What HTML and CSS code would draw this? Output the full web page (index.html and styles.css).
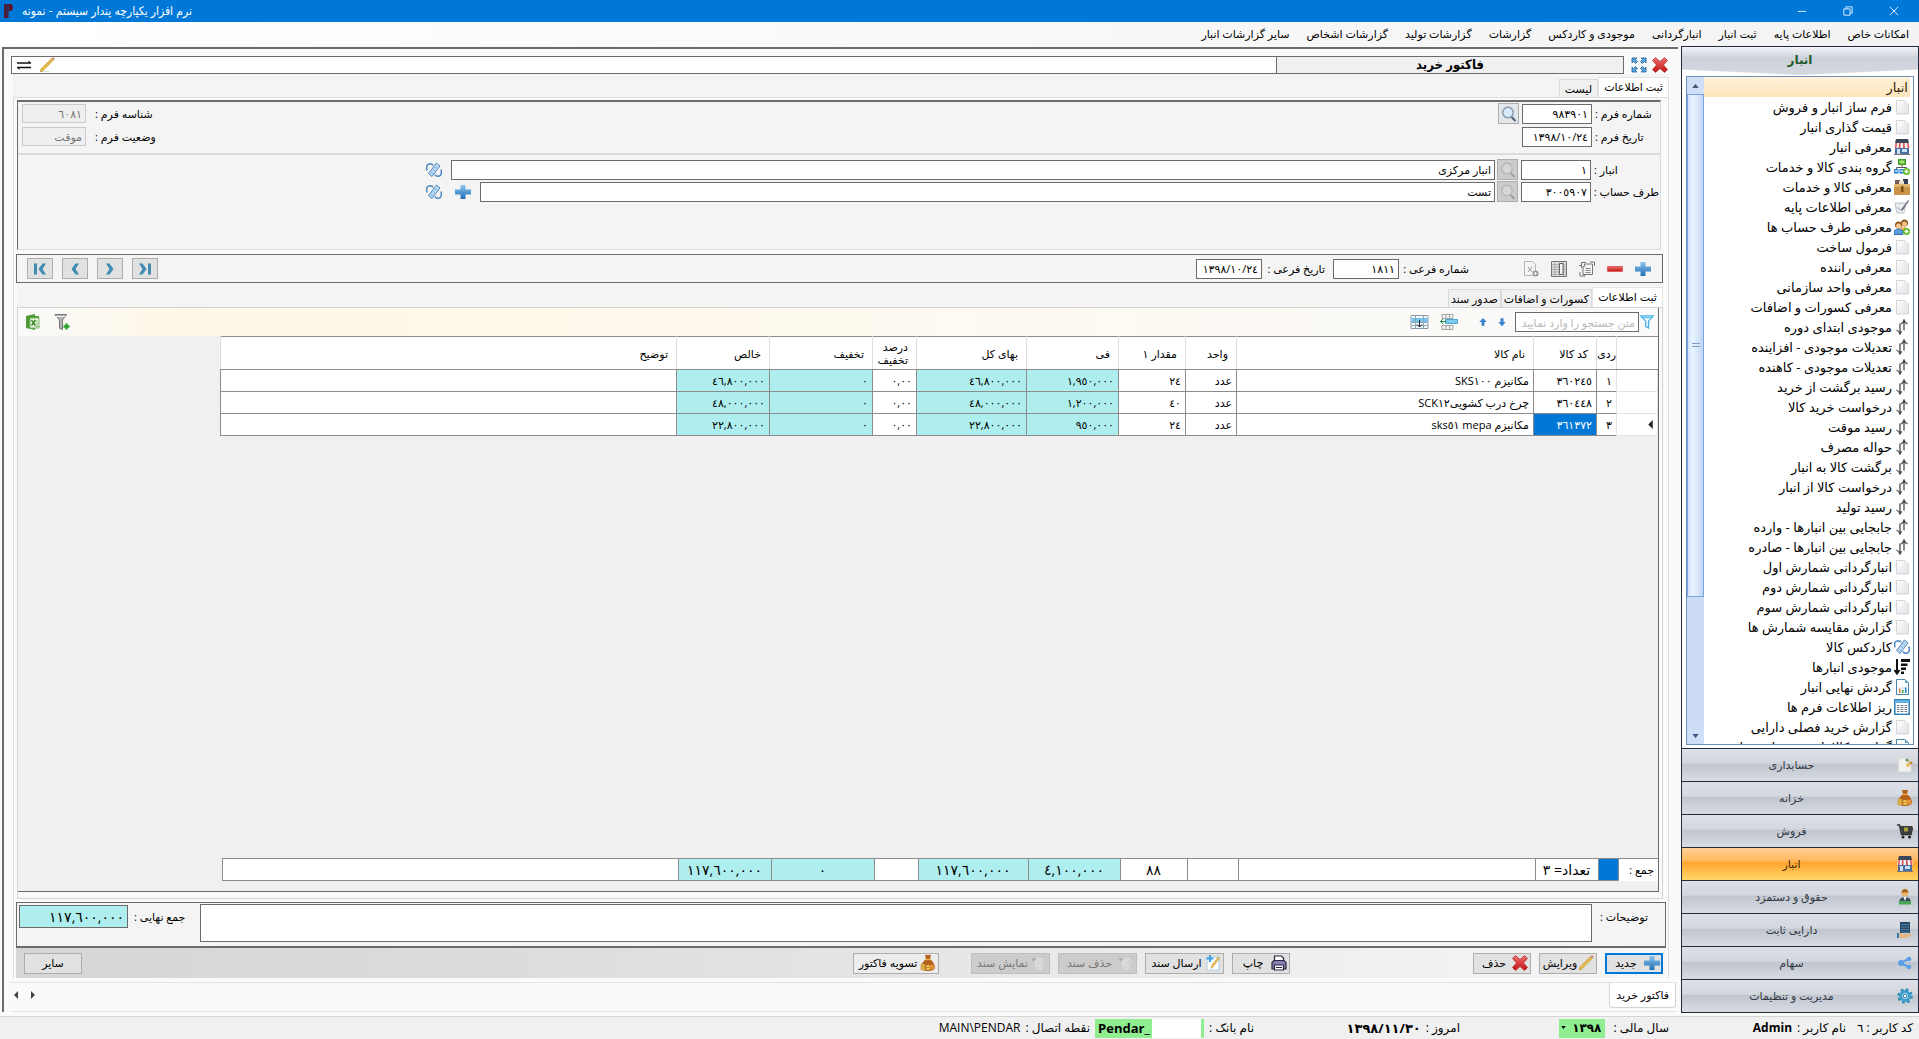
FILE: index.html
```html
<!DOCTYPE html>
<html lang="fa" dir="rtl">
<head>
<meta charset="utf-8">
<title>نرم افزار یکپارچه پندار سیستم - نمونه</title>
<link rel="stylesheet" href="styles.css">
</head>
<body>
<svg class="sprite" aria-hidden="true">
  <defs>
    <linearGradient id="gBlue" x1="0" y1="0" x2="0" y2="1"><stop offset="0" stop-color="#8cc4ec"/><stop offset="1" stop-color="#1f6fb5"/></linearGradient>
    <linearGradient id="gRed" x1="0" y1="0" x2="0" y2="1"><stop offset="0" stop-color="#f07070"/><stop offset="1" stop-color="#c01010"/></linearGradient>
    <linearGradient id="gPage" x1="0" y1="0" x2="1" y2="1"><stop offset="0" stop-color="#ffffff"/><stop offset="1" stop-color="#dfe1e4"/></linearGradient>
    <symbol id="page" viewBox="0 0 16 16"><path d="M2.500 1.500H11L14.500 5V15H2.500z" fill="url(#gPage)" stroke="#d3d6da"/><path d="M11 1.500V5h3.500" fill="#fff" stroke="#dcdfe2"/></symbol>
    <symbol id="store" viewBox="0 0 16 16"><path d="M2 0h12l1 4H1z" fill="#3d4656"/><path d="M1 4h14l1 5H0z" fill="#eef0f4"/><path d="M1.500 4H3L2.500 9H1zM5 4h1.500v5H4.700zM9 4h1.500l.5 5H9.200zM13 4h1.500l.8 5h-1.600z" fill="#dc5050"/><path d="M1 9h14v6H1z" fill="#4c6ea0"/><path d="M3 10h3v5H3zM8 10h5v3H8z" fill="#c9e0f4"/><path d="M0 15h16v1H0z" fill="#777"/></symbol>
    <symbol id="group" viewBox="0 0 16 16"><path d="M4 0h8v6H4z" fill="#3f9c22"/><path d="M5.500 1.500h5v3h-5z" fill="#a6e372"/><path d="M8 6v3M2.500 10V8.500h10V10" stroke="#555" fill="none"/><path d="M0 10h4.500v4.500H0zM5.500 10H10v4.500H5.500z" fill="#2b7fd0"/><path d="M1 11h2.500v2H1zM6.500 11H9v2H6.500z" fill="#a8d4f7"/><circle cx="12.500" cy="12.500" r="3.500" fill="#5dbb1e"/><path d="M12.500 10.500v4M10.500 12.500h4" stroke="#fff" stroke-width="1.500"/></symbol>
    <symbol id="box" viewBox="0 0 16 16"><path d="M1 1h5v4H1z" fill="#7a5b53"/><path d="M9 0h5v5H9z" fill="#333b52"/><path d="M5 2h5v3H5z" fill="#e8dccd"/><path d="M0 5h16v11H0z" fill="#c99446"/><path d="M0 5h16v3H0z" fill="#e0b76f"/><path d="M7 7h2.500v6H7z" fill="#7d5318"/></symbol>
    <symbol id="edit" viewBox="0 0 16 16"><path d="M1 4h11l-2 10H3z" fill="#e8ebef" stroke="#bcc2ca"/><path d="M3 8l3 3 3-2" stroke="#a3abb5" fill="none"/><path d="M14 1l1 1-6 9-2 1 .5-2z" fill="#70757d"/></symbol>
    <symbol id="people" viewBox="0 0 16 16"><circle cx="10.500" cy="4" r="3.500" fill="#8c571f"/><circle cx="10.500" cy="5" r="2.500" fill="#f1bf83"/><path d="M6 14V10q4-4 8 0v4z" fill="#e7b553"/><circle cx="4.500" cy="6" r="3.500" fill="#95591d"/><circle cx="4.500" cy="7" r="2.500" fill="#f5c992"/><path d="M0 15.500V12q4.500-4 9 0v3.500z" fill="#5c9de0" stroke="#2f6db4"/><circle cx="12.500" cy="12.500" r="3.500" fill="#5dbb1e"/><path d="M12.500 10.500v4M10.500 12.500h4" stroke="#fff" stroke-width="1.500"/></symbol>
    <symbol id="updown" viewBox="0 0 16 16"><path d="M6 4.500v10M2.500 11q2.500 1 3.500 4 .5-1.500 1.800-2.500M10 11.500v-10M13.500 5q-2.500-1-3.500-4-.8 3-3 4" fill="none" stroke="#4b4b4b" stroke-width="1.300"/></symbol>
    <symbol id="kardex" viewBox="0 0 16 16"><g fill="#b9d9f4" stroke="#356da8"><path d="M2.500 11.500L10.500 1l3.500 3L6 14.500z" stroke-width=".8"/><path d="M4.500 9.800l3 2.500M6.500 7l3 2.500M8.500 4.300l3 2.500" fill="none" stroke="#7fb0dc"/><path d="M1 8.500Q-.5 2 4 1.700q2.500 0 3 1.800M15 7.500q1.500 6.500-3 6.800-2.500 0-3-1.800" fill="none" stroke="#4a86c2" stroke-width="1.500"/></g></symbol>
    <symbol id="sort" viewBox="0 0 16 16"><path d="M3 0v13M.5 11L3 14.500 5.500 11" stroke="#111" stroke-width="2" fill="none"/><path d="M7 0h9v3H7zM7 4.500h6.500v2.500H7zM7 8.500h5V11H7zM7 12.500h3V15H7z" fill="#111"/></symbol>
    <symbol id="report" viewBox="0 0 16 16"><path d="M2.500.5H11L14.500 4v11.500h-12z" fill="#fff" stroke="#4684a8"/><path d="M11 .5V4h3.500z" fill="#5aa0c4"/><path d="M4 8h9v6H4z" fill="#dff0f7"/><path d="M5 9.500h1.500V14H5z" fill="#e68a2e"/><path d="M8 11h1.500v3H8z" fill="#3fa146"/><path d="M11 8.500h1.500V14H11z" fill="#2d88c4"/></symbol>
    <symbol id="grid" viewBox="0 0 16 16"><path d="M.8.8h14.400v14.400H.8z" fill="#fff" stroke="#2c7eb5" stroke-width="1.500"/><path d="M1 1h14v3H1z" fill="#62aedb"/><path d="M3 6.500h10M3 8.500h10M3 10.500h10M3 12.500h10" stroke="#6b7a85"/><path d="M6 5v10M10 5v10" stroke="#fff"/></symbol>
    <symbol id="plus" viewBox="0 0 16 16"><path d="M5.500 1h5v4.500H16v5h-5.500V15h-5v-4.500H0v-5h5.500z" fill="url(#gBlue)"/></symbol>
    <symbol id="minus" viewBox="0 0 16 16"><path d="M.5 5.500h15v5H.5z" fill="url(#gRed)" stroke="#e06060"/></symbol>
    <symbol id="cross" viewBox="0 0 16 16"><path d="M3.500.5L8 4.500 12.500.5l3 3L11.500 8l4 4.500-3 3L8 11.500l-4.500 4-3-3L4.500 8l-4-4.500z" fill="url(#gRed)" stroke="#a81414" stroke-width=".6"/></symbol>
    <symbol id="expand" viewBox="0 0 16 16"><path d="M1 1h5L4.500 2.500l2 2-2 2-2-2L1 6zM15 1h-5l1.500 1.500-2 2 2 2 2-2L15 6zM1 15h5l-1.500-1.500 2-2-2-2-2 2L1 10zM15 15h-5l1.500-1.500-2-2 2-2 2 2L15 10z" fill="#5ba3dc" stroke="#1f609c" stroke-width=".8"/></symbol>
    <symbol id="lens" viewBox="0 0 16 16"><path d="M10.500 11l4 4" stroke="#4a6076" stroke-width="2"/><circle cx="7" cy="6.500" r="5.200" fill="#d6ebfb" stroke="#8497aa" stroke-width="1.400"/></symbol>
    <symbol id="pencil" viewBox="0 0 16 16"><path d="M2 14.500h8" stroke="#ddd"/><path d="M1 15l1-3.200L12.500 1.500l1.800 1.800L4 13.700z" fill="#e7bd4e" stroke="#b98d28" stroke-width=".6"/><path d="M12.500 1.500L14 0l2 2-1.700 1.300z" fill="#d08c80"/></symbol>
    <symbol id="swap" viewBox="0 0 16 16"><path d="M1 6h14M1 10.500h14" stroke="#111" stroke-width="1.400"/><path d="M12.500 3.500V6H15zM3.500 13v-2.500H1z" fill="#111"/></symbol>
    <symbol id="copy" viewBox="0 0 16 16"><path d="M5.500 5.500V3h8v10.500H4v-8z" fill="#f4f4f4" stroke="#777"/><path d="M6.500 7.500h5M6.500 9.500h5M6.500 11.500h5" stroke="#888"/><path d="M2.500 7V1.500H7M0 4.500h2.500M11 1h4.500v4M1 15h5l-2-2M1 15v-4" fill="none" stroke="#777"/></symbol>
    <symbol id="cols" viewBox="0 0 16 16"><path d="M.5 .5h15v15H.5z" fill="#e4e4e4" stroke="#777"/><path d="M1 3.500h14M1 6h14M1 8.500h14M1 11h14M1 13.500h14M4 1v14M8 1v14M12.500 1v14" stroke="#aaa"/><path d="M8.500 2.500h3.500v11H8.500z" fill="#f4f4f4" stroke="#666"/></symbol>
    <symbol id="xpage" viewBox="0 0 16 16"><path d="M1.500.5h8l3 3v11h-11z" fill="#f5f5f5" stroke="#b5b5b5"/><path d="M5 6l4 5M9 6l-4 5" stroke="#999"/><circle cx="12.500" cy="12.500" r="3" fill="#999"/><path d="M11 12.500h3M12.500 11v3" stroke="#eee"/></symbol>
    <symbol id="funnel" viewBox="0 0 16 16"><path d="M.7 1h14.600L9.800 7v8L6.500 13V7z" fill="#e8f6fd" stroke="#45b0e6" stroke-width="1.400"/><path d="M2 3h12" stroke="#45b0e6"/></symbol>
    <symbol id="funnelplus" viewBox="0 0 16 16"><path d="M1 .5h11.500L8.500 6v9.500l-3-1V6z" fill="#b5b5b5" stroke="#777"/><path d="M2 2.500h9" stroke="#eee"/><path d="M12.500 9.500v6M9.500 12.500h6" stroke="#2da32d" stroke-width="2.500"/></symbol>
    <symbol id="excel" viewBox="0 0 16 16"><path d="M1 2l9-2v2h4v12h-4v2l-9-2z" fill="#4c9b35"/><path d="M5 4h9v10H5z" fill="#eef7ea" stroke="#77b562"/><path d="M6.500 6l4 5.500M10.500 6l-4 5.500" stroke="#3b8a27" stroke-width="1.500"/><path d="M12 6v7M10 12.500h4" stroke="#91c680"/></symbol>
    <symbol id="adown" viewBox="0 0 16 16"><path d="M6 3h4v5h3l-5 5.500L3 8h3z" fill="#3c82cf"/></symbol>
    <symbol id="aup" viewBox="0 0 16 16"><path d="M6 13h4V8h3L8 2.500 3 8h3z" fill="#3c82cf"/></symbol>
    <symbol id="rowins" viewBox="0 0 18 16"><path d="M2.500.5h11v4h-11zM2.500 11.500h11v4h-11zM6.500.5v4M10 .5v4M6.500 11.500v4M10 11.500v4" fill="#f4f4f4" stroke="#a5a5a5"/><path d="M6 5.500h12v4H6z" fill="#7ecbf0" stroke="#4aa6d4"/><path d="M7 7.500H1M3.500 5L1 7.500 3.500 10" stroke="#258a4a" fill="none"/></symbol>
    <symbol id="rowadd" viewBox="0 0 18 16"><path d="M.5 1.500h17v13H.5z" fill="#f4f9fc" stroke="#8a9aa6"/><path d="M1 4h16v4.500H1z" fill="#74c4ee"/><path d="M1 11.500h16M5 2v12M13 2v12M1 8.500h16" stroke="#8fa8b8"/><path d="M9 6v7M6.500 10.500L9 13l2.500-2.500" stroke="#223" fill="none"/></symbol>
    <symbol id="printer" viewBox="0 0 16 16"><path d="M3.500 6V1h7L12.500 3v3" fill="#fff" stroke="#2a2340" stroke-width="1.200"/><path d="M1 7.500L3 5.500h10l2 2V14H1z" fill="#8a80b4" stroke="#2a2340" stroke-width="1.200"/><path d="M3.500 10h9v5h-9z" fill="#fff" stroke="#2a2340" stroke-width="1.200"/><path d="M5 12.500h6" stroke="#2a2340"/></symbol>
    <symbol id="note" viewBox="0 0 16 16"><path d="M2 2h12v13H2z" fill="#fff" stroke="#a9cfe6"/><path d="M5 0v7M1.500 3.500h7" stroke="#3fa0dc" stroke-width="2.200"/><path d="M14.500 3L8 12l-2 1.500.5-2.500L13 2z" fill="#e9c04e" stroke="#b38a2c" stroke-width=".5"/></symbol>
    <symbol id="noteoff" viewBox="0 0 16 16"><path d="M2 3h12l-3 12H5z" fill="#dadada"/><path d="M1 2.500l5 1.500-4 3" fill="#adadad"/><path d="M14.500 2L8 12l-2 1.500.5-2.500z" fill="#f3f3f3" stroke="#bbb" stroke-width=".6"/></symbol>
    <symbol id="money" viewBox="0 0 16 16"><path d="M5 0h6L10 4q5 4 5 9-1 3-7 3t-7-3q0-5 5-9z" fill="#b3611d"/><path d="M5 4.500h6" stroke="#f0b44c" stroke-width="1.300"/><path d="M1 9h4v6H1zM6 10h4v5H6z" fill="#f4c95c" stroke="#b77a20" stroke-width=".5"/><path d="M1 11h4M1 13h4M6 12.500h4" stroke="#b77a20" stroke-width=".7"/><circle cx="12" cy="12" r="2.500" fill="#e5933a"/></symbol>
    <symbol id="ledger" viewBox="0 0 16 16"><path d="M2 1h9l3 3v11H1z" fill="#f1f2ee" stroke="#d6d8d4"/><path d="M9 3l5 2.500-4 4" stroke="#c68c4a" fill="none"/><circle cx="11" cy="8" r="2" fill="#e4c05e"/><circle cx="14" cy="6" r="1.500" fill="#c9853c"/><circle cx="10" cy="3" r="1.500" fill="#58915f"/></symbol>
    <symbol id="cart" viewBox="0 0 16 16"><path d="M0 2h2.500l2 9.500H14l1.500-7" stroke="#333" stroke-width="1.500" fill="none"/><path d="M3 3h12.500L14 11H5z" fill="#3e3e3e"/><path d="M7 4.500h4v4H7z" fill="#a9a03a"/><circle cx="6" cy="14" r="1.500" fill="#222"/><circle cx="12.500" cy="14" r="1.500" fill="#222"/></symbol>
    <symbol id="worker" viewBox="0 0 16 16"><circle cx="8" cy="4" r="3.500" fill="#e8b56f"/><path d="M4.500 3.500Q5 0 8 0t3.500 3.500z" fill="#a9661f"/><path d="M2 14q0-6 6-6t6 6z" fill="#3d4c5d"/><path d="M6.500 8h3L8 12z" fill="#fff"/><path d="M2 12h12v3.500H2z" fill="#4aa656"/></symbol>
    <symbol id="asset" viewBox="0 0 16 16"><path d="M3 0h10v11H3z" fill="#234a68"/><path d="M4 2.500h8M4 5h8M4 7.500h8M4 10h8" stroke="#6c98bb" stroke-width=".7"/><path d="M0 11h4l4 1h5l2 1-5 3H0z" fill="#e6b58a"/><path d="M0 11h2v5H0z" fill="#2c79b5"/></symbol>
    <symbol id="share" viewBox="0 0 16 16"><path d="M3.500 8l9-4.500M3.500 8l9 4.500" stroke="#5b9fe6" stroke-width="2"/><circle cx="4" cy="8" r="3" fill="#5b9fe6"/><circle cx="12" cy="4" r="2.300" fill="#5b9fe6"/><circle cx="12" cy="12" r="2.300" fill="#5b9fe6"/></symbol>
    <symbol id="gear" viewBox="0 0 16 16"><circle cx="8" cy="8" r="6.300" fill="none" stroke="#2f8cb8" stroke-width="3" stroke-dasharray="2.500 2.450"/><circle cx="8" cy="8" r="4.400" fill="#cfe9f5" stroke="#3d9dc8" stroke-width="3"/><circle cx="8" cy="8" r="1.800" fill="#fff" stroke="#2f7ca2"/></symbol>
    <symbol id="first" viewBox="0 0 16 16"><path d="M2 2.500h3v11H2zM10.500 2.500H14L10.500 8l3.500 5.500h-3.500L6.500 8z" fill="#3f8cb0"/></symbol>
    <symbol id="prev" viewBox="0 0 16 16"><path d="M8.500 2.500h3.500L8.500 8l3.500 5.500H8.500L4.500 8z" fill="#3f8cb0"/></symbol>
  </defs>
</svg>

<header class="titlebar">
  <div class="window-buttons">
    <button aria-label="بستن"><svg viewBox="0 0 12 12"><path d="M1 1l10 10M11 1L1 11"/></svg></button>
    <button aria-label="بازیابی"><svg viewBox="0 0 12 12"><path d="M1 3.500h7.500V11H1zM3.500 3.500V1H11v7.500H8.500"/></svg></button>
    <button aria-label="کوچک کردن"><svg viewBox="0 0 12 12"><path d="M1 6.500h10"/></svg></button>
  </div>
  <div class="app-name"><span>نرم افزار یکپارچه پندار سیستم - نمونه</span>
    <svg class="logo" viewBox="0 0 12 16"><path d="M1 0h7q3 0 3 4t-3 4H6v8H1z" fill="#5c1029"/><path d="M4 0v14M6 2v5" stroke="#0b4f94" stroke-width=".8"/></svg></div>
</header>

<nav class="menubar">
  <a href="#">امکانات خاص</a><a href="#">اطلاعات پایه</a><a href="#">ثبت انبار</a><a href="#">انبارگردانی</a><a href="#">موجودی و کاردکس</a><a href="#">گزارشات</a><a href="#">گزارشات تولید</a><a href="#">گزارشات اشخاص</a><a href="#">سایر گزارشات انبار</a>
</nav>

<div class="workspace">
  <aside class="sidebar">
    <h2 class="side-title">انبار</h2>
    <div class="tree">
      <ul class="tree-list">
        <li class="tree-head"><a href="#">انبار</a></li>
        <li><a href="#"><svg><use href="#page"/></svg>فرم ساز انبار و فروش</a></li>
        <li><a href="#"><svg><use href="#page"/></svg>قیمت گذاری انبار</a></li>
        <li><a href="#"><svg><use href="#store"/></svg>معرفی انبار</a></li>
        <li><a href="#"><svg><use href="#group"/></svg>گروه بندی کالا و خدمات</a></li>
        <li><a href="#"><svg><use href="#box"/></svg>معرفی کالا و خدمات</a></li>
        <li><a href="#"><svg><use href="#edit"/></svg>معرفی اطلاعات پایه</a></li>
        <li><a href="#"><svg><use href="#people"/></svg>معرفی طرف حساب ها</a></li>
        <li><a href="#"><svg><use href="#page"/></svg>فرمول ساخت</a></li>
        <li><a href="#"><svg><use href="#page"/></svg>معرفی راننده</a></li>
        <li><a href="#"><svg><use href="#page"/></svg>معرفی واحد سازمانی</a></li>
        <li><a href="#"><svg><use href="#page"/></svg>معرفی کسورات و اضافات</a></li>
        <li><a href="#"><svg><use href="#updown"/></svg>موجودی ابتدای دوره</a></li>
        <li><a href="#"><svg><use href="#updown"/></svg>تعدیلات موجودی - افزاینده</a></li>
        <li><a href="#"><svg><use href="#updown"/></svg>تعدیلات موجودی - کاهنده</a></li>
        <li><a href="#"><svg><use href="#updown"/></svg>رسید برگشت از خرید</a></li>
        <li><a href="#"><svg><use href="#updown"/></svg>درخواست خرید کالا</a></li>
        <li><a href="#"><svg><use href="#updown"/></svg>رسید موقت</a></li>
        <li><a href="#"><svg><use href="#updown"/></svg>حواله مصرف</a></li>
        <li><a href="#"><svg><use href="#updown"/></svg>برگشت کالا به انبار</a></li>
        <li><a href="#"><svg><use href="#updown"/></svg>درخواست کالا از انبار</a></li>
        <li><a href="#"><svg><use href="#updown"/></svg>رسید تولید</a></li>
        <li><a href="#"><svg><use href="#updown"/></svg>جابجایی بین انبارها - وارده</a></li>
        <li><a href="#"><svg><use href="#updown"/></svg>جابجایی بین انبارها - صادره</a></li>
        <li><a href="#"><svg><use href="#page"/></svg>انبارگردانی شمارش اول</a></li>
        <li><a href="#"><svg><use href="#page"/></svg>انبارگردانی شمارش دوم</a></li>
        <li><a href="#"><svg><use href="#page"/></svg>انبارگردانی شمارش سوم</a></li>
        <li><a href="#"><svg><use href="#page"/></svg>گزارش مقایسه شمارش ها</a></li>
        <li><a href="#"><svg><use href="#kardex"/></svg>کاردکس کالا</a></li>
        <li><a href="#"><svg><use href="#sort"/></svg>موجودی انبارها</a></li>
        <li><a href="#"><svg><use href="#report"/></svg>گردش نهایی انبار</a></li>
        <li><a href="#"><svg><use href="#grid"/></svg>ریز اطلاعات فرم ها</a></li>
        <li><a href="#"><svg><use href="#page"/></svg>گزارش خرید فصلی دارایی</a></li>
        <li><a href="#"><svg><use href="#report"/></svg>گزارش کالاهای در نقطه سفارش</a></li>
      </ul>
      <div class="scrollbar">
        <button class="arrow" aria-label="بالا"><svg viewBox="0 0 8 5"><path d="M0 5l4-5 4 5z" fill="#4a5263"/></svg></button>
        <div class="thumb"><i></i></div>
        <div class="track"></div>
        <button class="arrow" aria-label="پایین"><svg viewBox="0 0 8 5"><path d="M0 0l4 5 4-5z" fill="#3d5a8c"/></svg></button>
      </div>
    </div>
    <nav class="modules">
      <button><svg><use href="#ledger"/></svg><span>حسابداری</span></button>
      <button><svg><use href="#money"/></svg><span>خزانه</span></button>
      <button><svg><use href="#cart"/></svg><span>فروش</span></button>
      <button class="on"><svg><use href="#store"/></svg><span>انبار</span></button>
      <button><svg><use href="#worker"/></svg><span>حقوق و دستمزد</span></button>
      <button><svg><use href="#asset"/></svg><span>دارایی ثابت</span></button>
      <button><svg><use href="#share"/></svg><span>سهام</span></button>
      <button><svg><use href="#gear"/></svg><span>مدیریت و تنظیمات</span></button>
    </nav>
  </aside>

  <main class="document">
    <div class="doc-head">
      <button class="icon" aria-label="بستن فرم"><svg><use href="#cross"/></svg></button>
      <button class="icon" aria-label="تمام صفحه"><svg><use href="#expand"/></svg></button>
      <div class="doc-bar">
        <h1>فاکتور خرید</h1>
        <div class="doc-tools">
          <button class="icon" aria-label="ویرایش فرم"><svg><use href="#pencil"/></svg></button>
          <button class="icon" aria-label="جابجایی"><svg><use href="#swap"/></svg></button>
        </div>
      </div>
    </div>

    <div class="tabs">
      <button class="tab on">ثبت اطلاعات</button><button class="tab">لیست</button>
    </div>

    <section class="page">
      <form class="form">
        <div class="form-top">
          <div class="rows">
            <div class="row"><label for="f-no">شماره فرم :</label><input id="f-no" class="w70" value="٩٨٣٩٠١"><button type="button" class="lens" aria-label="جستجو"><svg><use href="#lens"/></svg></button></div>
            <div class="row"><label for="f-date">تاریخ فرم :</label><input id="f-date" class="w70" value="١٣٩٨/١٠/٢٤"></div>
          </div>
          <div class="rows state">
            <div class="row"><label for="f-id">شناسه فرم :</label><input id="f-id" value="٦٠٨١" disabled></div>
            <div class="row"><label for="f-st">وضعیت فرم :</label><input id="f-st" value="موقت" disabled></div>
          </div>
        </div>
        <div class="form-bottom rows">
          <div class="row"><label for="f-wh">انبار :</label><input id="f-wh" class="w70" value="١"><button type="button" class="lens off" aria-label="جستجوی انبار" disabled><svg><use href="#lens"/></svg></button><input class="wide" aria-label="نام انبار" value="انبار مرکزی"><button type="button" class="icon" aria-label="کاردکس انبار"><svg><use href="#kardex"/></svg></button></div>
          <div class="row"><label for="f-ac">طرف حساب :</label><input id="f-ac" class="w70" value="٣٠٠٥٩٠٧"><button type="button" class="lens off" aria-label="جستجوی حساب" disabled><svg><use href="#lens"/></svg></button><input class="wide" aria-label="نام طرف حساب" value="تست"><button type="button" class="icon" aria-label="افزودن طرف حساب"><svg><use href="#plus"/></svg></button><button type="button" class="icon" aria-label="کاردکس حساب"><svg><use href="#kardex"/></svg></button></div>
        </div>
      </form>

      <div class="subbar">
        <div class="subbar-icons">
          <button class="icon" aria-label="افزودن"><svg><use href="#plus"/></svg></button>
          <button class="icon" aria-label="حذف ردیف"><svg><use href="#minus"/></svg></button>
          <button class="icon" aria-label="کپی"><svg><use href="#copy"/></svg></button>
          <button class="icon" aria-label="ستون ها"><svg><use href="#cols"/></svg></button>
          <button class="icon" aria-label="خروجی"><svg><use href="#xpage"/></svg></button>
        </div>
        <label for="s-no">شماره فرعی :</label><input id="s-no" value="١٨١١">
        <label for="s-date" class="second">تاریخ فرعی :</label><input id="s-date" value="١٣٩٨/١٠/٢٤">
        <div class="pager">
          <button aria-label="آخرین"><svg class="flip"><use href="#first"/></svg></button>
          <button aria-label="بعدی"><svg class="flip"><use href="#prev"/></svg></button>
          <button aria-label="قبلی"><svg><use href="#prev"/></svg></button>
          <button aria-label="اولین"><svg><use href="#first"/></svg></button>
        </div>
      </div>

      <div class="tabs inner">
        <button class="tab on">ثبت اطلاعات</button><button class="tab">کسورات و اضافات</button><button class="tab">صدور سند</button>
      </div>

      <div class="subpage"><div class="sheet">
        <div class="filter">
          <svg class="funnel"><use href="#funnel"/></svg>
          <input type="text" aria-label="جستجو" placeholder="متن جستجو را وارد نمایید">
          <button class="icon small" aria-label="پایین"><svg><use href="#adown"/></svg></button>
          <button class="icon small" aria-label="بالا"><svg><use href="#aup"/></svg></button>
          <button class="icon big" aria-label="درج ردیف"><svg><use href="#rowins"/></svg></button>
          <button class="icon big" aria-label="افزودن ردیف"><svg><use href="#rowadd"/></svg></button>
          <div class="filter-end">
            <button class="icon" aria-label="فیلتر جدید"><svg><use href="#funnelplus"/></svg></button>
            <button class="icon" aria-label="اکسل"><svg><use href="#excel"/></svg></button>
          </div>
        </div>
        <div class="grid-wrap">
          <table class="grid">
            <colgroup><col class="c-mark"><col class="c-row"><col class="c-code"><col class="c-name"><col class="c-unit"><col class="c-qty"><col class="c-fee"><col class="c-total"><col class="c-pct"><col class="c-disc"><col class="c-net"><col></colgroup>
            <thead><tr><th></th><th class="tight">ردی</th><th>کد کالا</th><th>نام کالا</th><th>واحد</th><th>مقدار ١</th><th>فی</th><th>بهای کل</th><th>درصد تخفیف</th><th>تخفیف</th><th>خالص</th><th>توضیح</th></tr></thead>
            <tbody>
              <tr><td class="mark"></td><td>١</td><td>٣٦٠٢٤٥</td><td>مکانیزم SKS١٠٠</td><td>عدد</td><td>٢٤</td><td class="aq">١,٩٥٠,٠٠٠</td><td class="aq">٤٦,٨٠٠,٠٠٠</td><td>٠,٠٠</td><td class="aq">٠</td><td class="aq">٤٦,٨٠٠,٠٠٠</td><td></td></tr>
              <tr><td class="mark"></td><td>٢</td><td>٣٦٠٤٤٨</td><td>چرخ درب کشویی<bdi dir="ltr">SCK١٢</bdi></td><td>عدد</td><td>٤٠</td><td class="aq">١,٢٠٠,٠٠٠</td><td class="aq">٤٨,٠٠٠,٠٠٠</td><td>٠,٠٠</td><td class="aq">٠</td><td class="aq">٤٨,٠٠٠,٠٠٠</td><td></td></tr>
              <tr><td class="mark"><svg viewBox="0 0 5 10"><path d="M5 0v10L0 5z" fill="#222"/></svg></td><td>٣</td><td class="sel">٣٦١٣٧٢</td><td>مکانیزم <bdi dir="ltr">sks٥١ mepa</bdi></td><td>عدد</td><td>٢٤</td><td class="aq">٩٥٠,٠٠٠</td><td class="aq">٢٢,٨٠٠,٠٠٠</td><td>٠,٠٠</td><td class="aq">٠</td><td class="aq">٢٢,٨٠٠,٠٠٠</td><td></td></tr>
            </tbody>
          </table>
        </div>
        <div class="grid-wrap sums">
          <table class="grid sum">
            <colgroup><col class="c-mark"><col class="c-row"><col class="c-code"><col class="c-name"><col class="c-unit"><col class="c-qty"><col class="c-fee"><col class="c-total"><col class="c-pct"><col class="c-disc"><col class="c-net"><col></colgroup>
            <tbody><tr><th scope="row">جمع :</th><td class="sel"></td><td>تعداد= ٣</td><td></td><td></td><td>٨٨</td><td class="aq">٤,١٠٠,٠٠٠</td><td class="aq">١١٧,٦٠٠,٠٠٠</td><td></td><td class="aq">٠</td><td class="aq">١١٧,٦٠٠,٠٠٠</td><td></td></tr></tbody>
          </table>
        </div>
      </div></div>

      <div class="notes">
        <label for="n-text">توضیحات :</label><textarea id="n-text"></textarea>
        <label for="n-sum" class="sum-label">جمع نهایی :</label><input id="n-sum" value="١١٧,٦٠٠,٠٠٠">
      </div>

      <div class="actions">
        <div class="set">
          <button class="act w58 primary"><svg><use href="#plus"/></svg><span>جدید</span></button>
          <button class="act w58"><svg><use href="#pencil"/></svg><span>ویرایش</span></button>
          <button class="act w58"><svg><use href="#cross"/></svg><span>حذف</span></button>
        </div>
        <div class="set mid">
          <button class="act w58"><svg><use href="#printer"/></svg><span>چاپ</span></button>
          <button class="act w79"><svg><use href="#note"/></svg><span>ارسال سند</span></button>
          <button class="act w79" disabled><svg><use href="#noteoff"/></svg><span>حذف سند</span></button>
          <button class="act w79" disabled><svg><use href="#noteoff"/></svg><span>نمایش سند</span></button>
        </div>
        <button class="act settle"><svg><use href="#money"/></svg><span>تسویه فاکتور</span></button>
        <button class="act w58 other"><span>سایر</span></button>
      </div>
    </section>

    <div class="doc-tabs">
      <button class="doc-tab">فاکتور خرید</button>
      <div class="doc-scroll">
        <button class="icon" aria-label="برگه بعد"><svg viewBox="0 0 16 16"><path d="M6 4v8l4-4z" fill="#444"/></svg></button>
        <button class="icon" aria-label="برگه قبل"><svg viewBox="0 0 16 16"><path d="M10 4v8L6 8z" fill="#444"/></svg></button>
      </div>
    </div>
  </main>
</div>

<footer class="status">
  <div class="s-user">کد کاربر : ٦</div>
  <div class="s-name">نام کاربر : <b>Admin</b></div>
  <div class="s-year"><label for="year">سال مالی :</label><select id="year"><option>١٣٩٨</option></select></div>
  <div class="s-today">امروز : <b class="date">١٣٩٨/١١/٣٠</b></div>
  <div class="s-bank">نام بانک :<span class="bank"><b dir="ltr">Pendar_</b></span></div>
  <div class="s-conn">نقطه اتصال : <bdi dir="ltr">MAIN\PENDAR</bdi></div>
</footer>
</body>
</html>
```
FILE: styles.css
```css
* { box-sizing: border-box; }
html, body { height: 100%; }
body {
  margin: 0;
  display: flex;
  flex-direction: column;
  background: #f0f0f0;
  color: #000;
  font: 11px/16px "Open Sans", "DejaVu Sans", sans-serif;
  overflow: hidden;
}
button, input, textarea, select { font: inherit; color: inherit; margin: 0; }
button { padding: 0; border: 0; background: none; cursor: pointer; white-space: nowrap; }
a { color: inherit; text-decoration: none; }
label { white-space: nowrap; }
svg { display: block; flex: none; width: 16px; height: 16px; }
.sprite { position: absolute; width: 0; height: 0; }
input, textarea { border: 1px solid #6b6b6b; border-radius: 0; background: #fff; padding: 0 3px; outline: 0; min-width: 0; }
.icon { display: flex; align-items: center; justify-content: center; width: 16px; height: 16px; flex: none; }

/* Window frame */
.titlebar { display: flex; justify-content: space-between; flex: none; height: 22px; background: #0078d7; color: #fff; }
.window-buttons { display: flex; padding-right: 2px; }
.window-buttons button { display: flex; align-items: center; justify-content: center; width: 46px; }
.window-buttons svg { width: 10px; height: 10px; fill: none; stroke: #fff; }
.app-name { display: flex; align-items: center; gap: 8px; padding-left: 3px; font-family: "Open Sans", "DejaVu Sans Condensed", sans-serif; font-size: 12px; }
.logo { width: 11px; height: 14px; }

.menubar { display: flex; align-items: center; flex: none; gap: 17px; height: 24px; padding-right: 10px; white-space: nowrap; background: linear-gradient(to left, #f3f3f3, #fff); }

.workspace { display: flex; flex: 1; min-height: 0; padding-bottom: 3px; background: #fafafa; }

/* Sidebar */
.sidebar { display: flex; flex-direction: column; flex: none; width: 238px; border: 1px solid #222b3a; border-bottom: 0; background: #fff; }
.side-title { flex: none; height: 28px; margin: 0 0 1px; color: #1f5a2b; font-size: 12px; line-height: 26px; text-align: center; background: linear-gradient(#f2f4f7, #ccd1da 40%, #d5d9e1); clip-path: polygon(0 0, 100% 0, 100% 80%, 50% 100%, 0 80%); }
.tree { display: flex; flex: 1; min-height: 0; margin: 0 4px 3px; border: 1px solid #6a8fc0; overflow: hidden; }
.tree-list { flex: 1; margin: 0; padding: 0 3px 0 0; list-style: none; overflow: hidden; font-size: 13px; line-height: 20px; white-space: nowrap; }
.tree-list li { height: 20px; }
.tree-list a { display: flex; align-items: center; gap: 2px; height: 20px; }
.tree-head { padding-right: 2px; background: linear-gradient(#fff2da, #fde6bd); color: #3a1e04; }
.scrollbar { display: flex; flex-direction: column; flex: none; width: 17px; background: #cddcf5; }
.arrow { display: flex; align-items: center; justify-content: center; flex: none; height: 17px; background: #cfdff8; }
.arrow svg { width: 7px; height: 4px; }
.thumb { display: flex; align-items: center; justify-content: center; flex: 503; border: 1px solid #7ba2dc; background: linear-gradient(to right, #cfe0f8, #eaf3ff 30%, #dce9fb 60%, #bfd5f7); }
.thumb i { width: 8px; height: 6px; background: repeating-linear-gradient(#7d9cc9 0 1px, transparent 1px 3px); }
.track { flex: 130; }

.modules { display: flex; flex-direction: column; flex: none; }
.modules button { display: flex; align-items: center; height: 33px; padding: 0 5px 0 4px; border-top: 1px solid #222b3a; color: #2f3742; background: linear-gradient(#dde0e6, #d3d7de 45%, #bfc4cd 46%, #d8dce3); }
.modules button:last-child { border-bottom: 1px solid #222b3a; height: 34px; }
.modules .on { color: #3c2205; background: linear-gradient(#ffcf97, #ffb95c 40%, #ffa52f 46%, #ffd766); }
.modules span { flex: 1; text-align: center; }

/* Document */
.document { display: flex; flex-direction: column; flex: 1; min-width: 0; margin: 1px 3px 1px 2px; padding: 7px 9px 0 7px; border: solid #6b6b6b; border-width: 2px 0 0 2px; background: #fafafa; }
.doc-head { display: flex; align-items: center; flex: none; padding-right: 1px; gap: 5px; }
.doc-bar { display: flex; flex: 1; height: 18px; margin-right: 2px; border: 1px solid #6b6b6b; background: #fff; }
.doc-bar h1 { width: 347px; margin: 0; border-left: 1px solid #6b6b6b; background: #f0f0f0; font-family: "Open Sans", "DejaVu Sans Condensed", sans-serif; font-size: 13px; line-height: 14px; text-align: center; }
.doc-tools { display: flex; gap: 7px; margin-right: auto; padding-left: 4px; }

.tabs { display: flex; align-items: flex-end; flex: none; height: 23px; background: #f4f4f4; margin-left: 2px; }
.tab { height: 18px; padding: 0 5px; border: 1px solid #d9d9d9; border-bottom: 0; background: #f0f0f0; line-height: 16px; }
.tab.on { height: 20px; padding: 0 5px 2px; background: #fff; border-color: #e4e4e4; width: 71px; }

.page { display: flex; flex-direction: column; flex: 1; min-height: 0; margin-left: 2px; padding: 2px 2px 0; border: 1px solid #dcdcdc; border-bottom: 0; }
.form { flex: none; margin: 0 5px 0 1px; border: 1px solid #dcdcdc; border-top: 2px solid #6b6b6b; border-left: 1px solid #6b6b6b; background: #f4f4f4; }
.form-top { display: flex; justify-content: space-between; padding: 1px 0 6px 4px; border-bottom: 2px solid #dcdcdc; }
.rows { display: flex; flex-direction: column; gap: 2px; }
.row { display: flex; align-items: center; height: 21px; }
.row label { width: 65px; text-align: left; }
.row input { height: 20px; margin-right: 3px; }
.w70 { width: 70px; }
.lens { display: flex; align-items: center; justify-content: center; width: 21px; height: 21px; margin-right: 3px; border: 1px solid #adadad; background: #e3e6e9; }
.lens.off { background: #ccc; filter: grayscale(1); }
.lens.off svg { opacity: .4; }
.state input { width: 64px; height: 19px; margin-right: 9px; border: 1px solid #ccc; background: #efefef; color: #777; }
.form-bottom { gap: 1px; padding: 4px 1px 47px 408px; }
.form-bottom .wide { flex: 1; margin-right: 2px; }
.form-bottom .icon { margin-right: 9px; }
.form-bottom .icon + .icon { margin-right: 13px; }

.subbar { display: flex; align-items: center; flex: none; height: 29px; margin: 4px 3px 0 0; padding: 0 11px 0 10px; border: 1px solid #6b6b6b; background: #f4f4f4; }
.subbar-icons { display: flex; gap: 12px; margin-left: 54px; }
.subbar label { width: 66px; }
.subbar label.second { width: 59px; margin-right: 8px; }
.subbar input { width: 66px; height: 20px; margin-right: 4px; }
.pager { display: flex; gap: 9px; margin-right: auto; }
.pager button { display: flex; align-items: center; justify-content: center; width: 26px; height: 21px; border: 1px solid #adadad; background: #e1e1e1; }
.flip { transform: scaleX(-1); }

.tabs.inner { height: 24px; margin: 0 3px 0 1px; }
.tabs.inner .tab:not(.on) { padding: 0 2px; }
.subpage { display: flex; flex: 1; min-height: 0; margin: 0 3px 0 1px; padding: 0 3px 6px 0; border: 1px solid #d4d4d4; background: #fafafa; }
.sheet { display: flex; flex-direction: column; flex: 1; min-width: 0; border: solid #6b6b6b; border-width: 0 1px 1px 0; background: #f0f0f0; }
.filter { display: flex; align-items: center; flex: none; height: 28px; padding: 0 4px; background: linear-gradient(to left, #fafafa, #fffaf0 50%, #fff7e6 90%, #fafafa); }
.funnel { width: 14px; height: 16px; }
.filter input { width: 124px; height: 20px; margin: 0 1px 0 5px; padding: 0 3px; }
.filter input::placeholder { color: #b8b8b8; opacity: 1; }
.filter .icon { margin-left: 3px; }
.filter .small svg { width: 12px; height: 12px; }
.filter .big { width: 20px; margin: 0 14px 0 -6px; }
.filter .big svg { width: 19px; }
.filter .big + .big { margin-right: 15px; }
.filter-end { display: flex; gap: 10px; margin-right: auto; }

.grid-wrap { flex: none; padding-left: 202px; }
.grid { width: 100%; table-layout: fixed; border-collapse: collapse; background: #fff; border-top: 1px solid #8c8c8c; }
.c-mark { width: 41px; }
.c-row { width: 20px; }
.c-code { width: 63px; }
.c-name { width: 297px; }
.c-unit { width: 51px; }
.c-qty { width: 67px; }
.c-fee { width: 92px; }
.c-total { width: 110px; }
.c-pct { width: 44px; }
.c-disc { width: 103px; }
.c-net { width: 93px; }
.grid th, .grid td { padding: 0 4px; text-align: right; white-space: nowrap; overflow: hidden; }
.grid thead th { height: 33px; padding: 0 8px 0 0; border-left: 1px solid #dcdcdc; border-bottom: 1px solid #8c8c8c; font-weight: 400; line-height: 13px; white-space: normal; }
.grid thead .tight { padding: 0; white-space: nowrap; }
.grid td { height: 22px; border: 1px solid #8c8c8c; }
.grid .mark { border-color: #e2e2e2; }
.mark svg { width: 5px; height: 9px; margin-right: auto; margin-left: 27px; }
.grid .aq { background: #afeeee; }
.grid .sel { background: #0078d7; color: #fff; }
.sums { margin-top: auto; padding: 0 0 10px 204px; }
.sum .c-mark { width: 40px; }
.grid.sum td { text-align: center; font-size: 14px; }
.grid.sum th { font-weight: 400; background: #fff; }

.notes { display: flex; flex: none; height: 45px; margin-top: 3px; padding: 1px 1px 4px 2px; border: 1px solid #6b6b6b; background: #f4f4f4; }
.notes label { width: 72px; padding: 5px 16px 0 0; }
.notes textarea { flex: 1; resize: none; }
.notes .sum-label { padding: 5px 0 0 6px; text-align: left; }
.notes input { height: 23px; width: 109px; margin-top: 1px; background: #afeeee; font-size: 14px; }

.actions { display: flex; align-items: center; flex: none; height: 31px; padding: 0 3px 0 8px; border-top: 1px solid #6b6b6b; background: linear-gradient(to left, #f6f6f6, #ececec 30%, #dcdcdc 70%, #d6d6d6); }
.set { display: flex; gap: 8px; }
.mid { margin-right: 183px; }
.act { display: flex; align-items: center; height: 21px; padding: 0 2px; border: 1px solid #adadad; background: #e1e1e1; }
.act span { flex: 1; text-align: center; }
.act:disabled { background: #ccc; color: #777; border-color: #bfbfbf; }
.primary { border: 2px solid #0078d7; padding: 0 1px; }
.w58 { width: 58px; }
.w79 { width: 79px; }
.settle { width: 86px; margin-right: 32px; background: #ececec; }
.other { margin-right: auto; }

.doc-tabs { display: flex; justify-content: space-between; flex: none; height: 30px; margin-top: 4px; margin-right: -7px; border: solid #e2e2e2; border-width: 1px 0; }
.doc-tab { height: 25px; padding: 0 6px; border: 1px solid #d4d4d4; border-top: 0; border-radius: 0 0 4px 4px; background: #fff; }
.doc-scroll { display: flex; align-items: center; gap: 1px; margin-left: -3px; height: 24px; }

/* Status bar */
.status { display: flex; align-items: center; flex: none; height: 23px; padding-right: 6px; border-top: 1px solid #d4d4d4; font-size: 12px; white-space: nowrap; }
.status > div { display: flex; align-items: center; flex: none; gap: 5px; }
.s-user { width: 67px; }
.s-name { width: 177px; }
.s-year { width: 209px; }
.s-today { width: 206px; }
.s-bank { width: 164px; }
.status select { width: 46px; height: 19px; margin-right: 3px; padding: 0 4px 0 0; border: 0; appearance: none; background: #90ee90 url("data:image/svg+xml,%3Csvg xmlns='http://www.w3.org/2000/svg' viewBox='0 0 6 4'%3E%3Cpath d='M0 0h6L3 4z'/%3E%3C/svg%3E") 2px 7px / 5px 3px no-repeat; font-weight: 700; }
.bank { display: flex; justify-content: flex-end; width: 109px; height: 19px; border-right: 3px solid #90ee90; background: #fff; }
.bank b { width: 57px; padding-left: 3px; background: #90ee90; font-size: 13px; line-height: 19px; }
.status .date { font-size: 13px; }
```
